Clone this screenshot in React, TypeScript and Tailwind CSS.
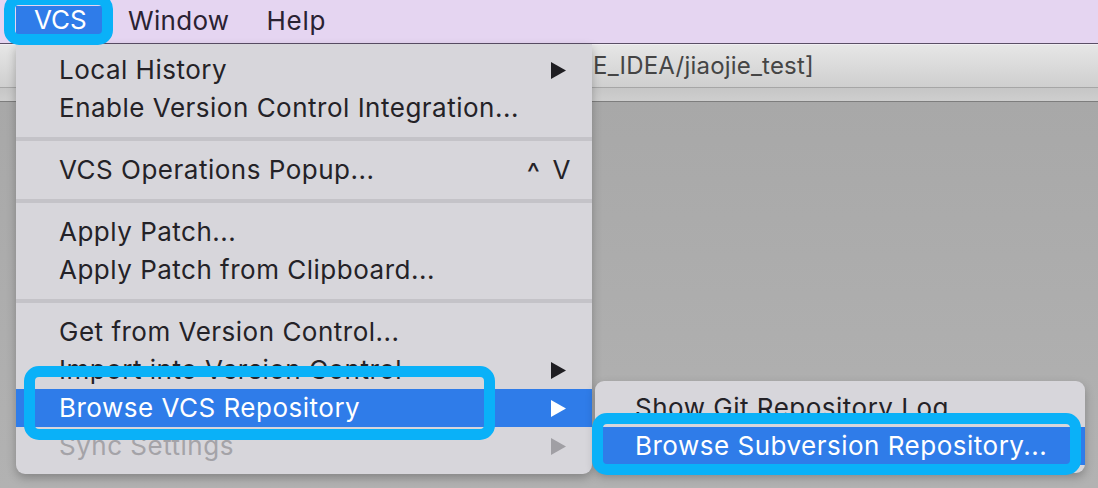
import { ReactNode } from 'react';

type Item =
  | { kind: 'sep' }
  | {
      kind: 'item';
      label: string;
      arrow?: boolean;
      shortcut?: string;
      selected?: boolean;
      disabled?: boolean;
    };

const MainItems: Item[] = [
  { kind: 'item', label: 'Local History', arrow: true },
  { kind: 'item', label: 'Enable Version Control Integration...' },
  { kind: 'sep' },
  { kind: 'item', label: 'VCS Operations Popup...', shortcut: '^ V' },
  { kind: 'sep' },
  { kind: 'item', label: 'Apply Patch...' },
  { kind: 'item', label: 'Apply Patch from Clipboard...' },
  { kind: 'sep' },
  { kind: 'item', label: 'Get from Version Control...' },
  { kind: 'item', label: 'Import into Version Control', arrow: true },
  { kind: 'item', label: 'Browse VCS Repository', arrow: true, selected: true },
  { kind: 'item', label: 'Sync Settings', arrow: true, disabled: true },
];

const SubItems = [
  { label: 'Show Git Repository Log', selected: false },
  { label: 'Browse Subversion Repository...', selected: true },
];

const Arrow = ({ color }: { color: string }) => (
  <svg width="15" height="17" viewBox="0 0 15 17">
    <path d="M0 0 L15 8.5 L0 17 Z" fill={color} />
  </svg>
);

const Outline = ({ className }: { className: string }) => (
  <div
    className={`absolute border-[11px] border-[#0ab1f8] rounded-[15px] pointer-events-none ${className}`}
  />
);

const Row = ({
  children,
  selected,
}: {
  children: ReactNode;
  selected?: boolean;
}) => (
  <div
    className={`flex items-center h-[38px] pl-[43px] pr-[26px] ${
      selected ? 'bg-[#2f7ce9] text-white' : ''
    }`}
  >
    {children}
  </div>
);

const App = () => {
  return (
    <div
      className="relative w-[1098px] h-[488px] overflow-hidden flex flex-col bg-[#acacac]"
      style={{ fontFamily: 'Inter, "Liberation Sans", sans-serif' }}
    >
      {/* Menu bar */}
      <header className="flex items-start h-[44px] shrink-0 bg-[#e5d5f1] border-b border-[#5a4f66] text-[26px] text-[#2a2232]">
        <div className="ml-[16px] mt-[6px] w-[86px] h-[28px] flex items-center pl-[18px] bg-[#2f7ce9] text-white leading-none">
          VCS
        </div>
        <div className="ml-[26px] h-[42px] flex items-center leading-none tracking-[0.3px]">
          Window
        </div>
        <div className="ml-[37px] h-[42px] flex items-center leading-none tracking-[0.8px]">
          Help
        </div>
      </header>

      {/* Window title bar */}
      <div className="flex items-center h-[44px] shrink-0 pl-[593px] border-t border-[#f1eef3] border-b border-b-[#a6a6a6] bg-gradient-to-b from-[#e6e6e6] to-[#cfcfcf] text-[24px] text-[#454545] tracking-[0.2px]">
        E_IDEA/jiaojie_test]
      </div>
      <div className="h-[14px] shrink-0 bg-gradient-to-b from-[#c6c6c6] to-[#cecece] border-b border-[#7d7d7d]" />
      <div className="flex-1 bg-gradient-to-b from-[#a8a8a8] to-[#b2b2b2]" />

      {/* VCS menu */}
      <div className="absolute left-[16px] top-[44px] w-[576px] pt-[7px] pb-[9px] bg-[#d7d6db] rounded-b-[9px] shadow-[0_4px_10px_rgba(0,0,0,0.25)] text-[26px] tracking-[0.5px] text-[#242227]">
        {MainItems.map((item, i) =>
          item.kind === 'sep' ? (
            <div key={i} className="h-[24px] flex items-center">
              <div className="w-full h-[4px] bg-[#c4c3c8]" />
            </div>
          ) : (
            <Row key={i} selected={item.selected}>
              <span
                className={`flex-1 leading-none ${
                  item.disabled ? 'text-[#a4a3a8]' : ''
                }`}
              >
                {item.label}
              </span>
              {item.shortcut && (
                <span className="leading-none -mr-[5px] flex items-center gap-[12px]">
                  <span className="text-[28px] mt-[6px]">^</span>
                  <span>V</span>
                </span>
              )}
              {item.arrow && (
                <Arrow
                  color={
                    item.selected
                      ? '#ffffff'
                      : item.disabled
                      ? '#a09fa4'
                      : '#1f1e22'
                  }
                />
              )}
            </Row>
          )
        )}
      </div>

      {/* Submenu */}
      <div className="absolute left-[595px] top-[381px] w-[490px] py-[8px] bg-[#d7d6db] rounded-[9px] shadow-[0_4px_10px_rgba(0,0,0,0.25)] text-[26px] tracking-[0.5px] text-[#242227]">
        {SubItems.map(item => (
          <div
            key={item.label}
            className={`flex items-center h-[38px] pl-[40px] leading-none ${
              item.selected ? 'bg-[#2f7ce9] text-white' : ''
            }`}
          >
            {item.label}
          </div>
        ))}
      </div>

      {/* Highlight annotations */}
      <Outline className="left-[4px] top-[-6px] w-[109px] h-[51px]" />
      <Outline className="left-[24px] top-[366px] w-[471px] h-[74px]" />
      <Outline className="left-[592px] top-[413px] w-[489px] h-[62px]" />
    </div>
  );
};

export default App;
